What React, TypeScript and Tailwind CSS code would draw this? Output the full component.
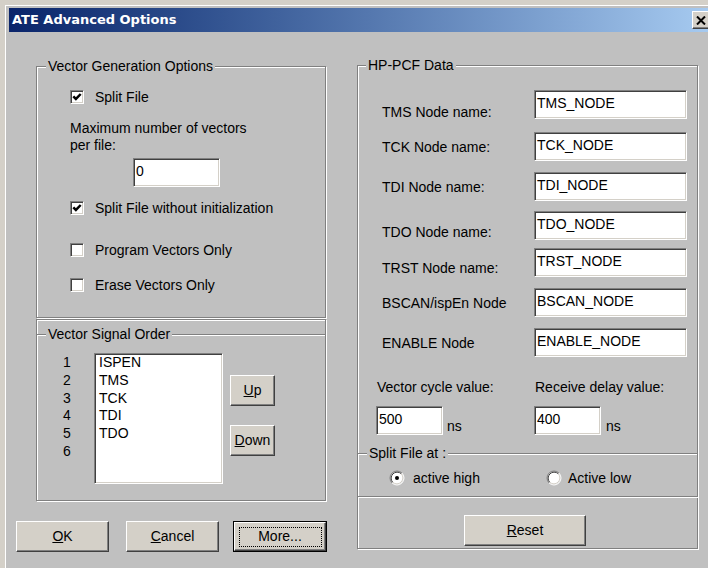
import type { ReactNode } from 'react'

// classic 3D edges
const SUNKEN =
  'border border-t-[#808080] border-l-[#808080] border-r-white border-b-white shadow-[inset_1px_1px_0_#404040,inset_-1px_-1px_0_#d4d0c8]'
const RAISED =
  'bg-[#d4d0c8] border border-t-white border-l-white border-r-[#404040] border-b-[#404040] shadow-[inset_-1px_-1px_0_#808080]'
const ETCHED = 'border border-[#808080] shadow-[inset_1px_1px_0_#fff,1px_1px_0_#fff]'

function Legend({ children, className = '' }: { children: ReactNode; className?: string }) {
  return (
    <span className={`absolute top-[-9px] bg-[#c0c0c0] px-[2px] leading-[16px] whitespace-nowrap ${className}`}>
      {children}
    </span>
  )
}

function CheckBox({ label, checked = false, className = '' }: { label: string; checked?: boolean; className?: string }) {
  return (
    <div className={`flex h-[16px] items-center ${className}`}>
      <span className={`flex h-[14px] w-[14px] shrink-0 items-center justify-center bg-white ${SUNKEN}`}>
        {checked && (
          <svg width="10" height="10" viewBox="0 0 10 10">
            <path d="M1.3 4.3 L3.9 6.9 L8.7 2" fill="none" stroke="#000" strokeWidth="2.5" />
          </svg>
        )}
      </span>
      <span className="ml-[11px] leading-[16px] whitespace-nowrap">{label}</span>
    </div>
  )
}

function Radio({ checked = false }: { checked?: boolean }) {
  return (
    <svg width="16" height="16" viewBox="0 0 16 16" className="shrink-0">
      <circle cx="8" cy="8" r="6.5" fill="#fff" />
      <path d="M3.05 12.95 A7 7 0 0 1 12.95 3.05" fill="none" stroke="#808080" />
      <path d="M12.95 3.05 A7 7 0 0 1 3.05 12.95" fill="none" stroke="#fff" />
      <path d="M3.76 12.24 A6 6 0 0 1 12.24 3.76" fill="none" stroke="#404040" />
      <path d="M12.24 3.76 A6 6 0 0 1 3.76 12.24" fill="none" stroke="#d4d0c8" />
      {checked && <circle cx="8" cy="8" r="2" fill="#000" />}
    </svg>
  )
}

function Field({ value, className = '' }: { value: string; className?: string }) {
  return (
    <div className={`h-[29px] shrink-0 bg-white pl-[2px] pt-[4px] leading-[16px] whitespace-nowrap ${SUNKEN} ${className}`}>
      {value}
    </div>
  )
}

function PushButton({ children, className = '' }: { children: ReactNode; className?: string }) {
  return (
    <button type="button" className={`flex h-[31px] items-center justify-center ${RAISED} ${className}`}>
      {children}
    </button>
  )
}

const nodeRows = [
  { label: 'TMS Node name:', value: 'TMS_NODE', mt: 'mt-[24px]', lt: 'mt-[14px]' },
  { label: 'TCK Node name:', value: 'TCK_NODE', mt: 'mt-[13px]', lt: 'mt-[7px]' },
  { label: 'TDI Node name:', value: 'TDI_NODE', mt: 'mt-[11px]', lt: 'mt-[7px]' },
  { label: 'TDO Node name:', value: 'TDO_NODE', mt: 'mt-[10px]', lt: 'mt-[13px]' },
  { label: 'TRST Node name:', value: 'TRST_NODE', mt: 'mt-[8px]', lt: 'mt-[12px]' },
  { label: 'BSCAN/ispEn Node', value: 'BSCAN_NODE', mt: 'mt-[11px]', lt: 'mt-[7px]' },
  { label: 'ENABLE Node', value: 'ENABLE_NODE', mt: 'mt-[11px]', lt: 'mt-[7px]' },
]

const signals = ['ISPEN', 'TMS', 'TCK', 'TDI', 'TDO']

export default function App() {
  return (
    <div className="h-[568px] w-[708px] overflow-hidden bg-[#d4d0c8] pl-[5px] pt-[5px] font-['Liberation_Sans',Arial,sans-serif] text-[14px] text-black">
      <div className="h-full border-l border-t border-white bg-[#c0c0c0] pl-[3px] pt-[2px]">
        {/* title bar */}
        <div className="flex h-[24px] items-center bg-linear-to-r from-[#0a246a] to-[#a6caf0] pl-[3px]">
          <span className="font-['DejaVu_Sans',sans-serif] text-[13px] font-bold leading-[16px] text-white">
            ATE Advanced Options
          </span>
          <span className={`ml-auto mr-[-2px] flex h-[18px] w-[18px] items-center justify-center ${RAISED}`}>
            <svg width="10" height="9" viewBox="0 0 10 9">
              <path d="M1 0.5 L9 8.5 M9 0.5 L1 8.5" stroke="#000" strokeWidth="2" />
            </svg>
          </span>
        </div>

        <div className="flex pl-[7px]">
          {/* left column */}
          <div className="flex w-[311px] flex-col">
            <div className={`relative ml-[20px] mt-[34px] h-[252px] w-[290px] ${ETCHED}`}>
              <Legend className="left-[9px]">Vector Generation Options</Legend>
              <div className="flex flex-col items-start pl-[33px] pt-[22px]">
                <CheckBox label="Split File" checked />
                <div className="mt-[15px] leading-[17px]">
                  Maximum number of vectors
                  <br />
                  per file:
                </div>
                <Field value="0" className="ml-[63px] mt-[4px] w-[87px]" />
                <CheckBox label="Split File without initialization" checked className="mt-[13px]" />
                <CheckBox label="Program Vectors Only" className="mt-[26px]" />
                <CheckBox label="Erase Vectors Only" className="mt-[19px]" />
              </div>
            </div>

            <div className={`ml-[20px] mt-[1px] h-[182px] w-[290px] ${ETCHED}`}>
              <div className="relative mt-[14px] border-t border-t-[#808080] shadow-[inset_0_1px_0_#fff]">
                <Legend className="left-[9px]">Vector Signal Order</Legend>
                <div className="flex items-start pl-[26px] pt-[18px]">
                  <div className="mt-[1px] w-[15px] leading-[17.8px]">
                    {[1, 2, 3, 4, 5, 6].map((n) => (
                      <div key={n}>{n}</div>
                    ))}
                  </div>
                  <div className={`ml-[16px] h-[131px] w-[129px] bg-white pl-[4px] leading-[17.8px] ${SUNKEN}`}>
                    {signals.map((s) => (
                      <div key={s}>{s}</div>
                    ))}
                  </div>
                  <div className="ml-[7px] flex flex-col">
                    <PushButton className="mt-[22px] w-[45px]">
                      <u>U</u>p
                    </PushButton>
                    <PushButton className="mt-[19px] w-[45px]">
                      <u>D</u>own
                    </PushButton>
                  </div>
                </div>
              </div>
            </div>

            <div className="mt-[20px] flex">
              <PushButton className="w-[93px]">
                <u>O</u>K
              </PushButton>
              <PushButton className="ml-[17px] w-[93px]">
                <u>C</u>ancel
              </PushButton>
              <button type="button" className="ml-[14px] h-[31px] w-[94px] border border-black">
                <span className={`flex h-full w-full items-center justify-center ${RAISED}`}>
                  <span className="flex h-[20px] w-[83px] items-center justify-center border border-dotted border-black">
                    More...
                  </span>
                </span>
              </button>
            </div>
          </div>

          {/* right column */}
          <div className="ml-[30px] mt-[33px] flex w-[341px] flex-col">
            <div className={`relative flex h-[432px] flex-col ${ETCHED}`}>
              <Legend className="left-[8px]">HP-PCF Data</Legend>

              {nodeRows.map((r) => (
                <div key={r.label} className={`flex h-[29px] pl-[24px] ${r.mt}`}>
                  <span className={`w-[152px] self-start leading-[16px] whitespace-nowrap ${r.lt}`}>{r.label}</span>
                  <Field value={r.value} className="w-[153px]" />
                </div>
              ))}

              <div className="mt-[22px] flex pl-[19px] leading-[16px]">
                <span className="w-[158px]">Vector cycle value:</span>
                <span>Receive delay value:</span>
              </div>
              <div className="mt-[11px] flex pl-[18px]">
                <div className="flex w-[158px] items-start">
                  <Field value="500" className="w-[67px]" />
                  <span className="ml-[4px] mt-[12px] leading-[16px]">ns</span>
                </div>
                <div className="flex items-start">
                  <Field value="400" className="w-[67px]" />
                  <span className="ml-[5px] mt-[12px] leading-[16px]">ns</span>
                </div>
              </div>

              <div className="relative mt-[18px] flex-1 border-t border-t-[#808080] shadow-[inset_0_1px_0_#fff]">
                <Legend className="left-[9px]">Split File at :</Legend>
                <div className="flex pl-[31px] pt-[16px]">
                  <div className="flex h-[16px] w-[157px] items-center">
                    <Radio checked />
                    <span className="ml-[8px]">active high</span>
                  </div>
                  <div className="flex h-[16px] items-center">
                    <Radio />
                    <span className="ml-[6px]">Active low</span>
                  </div>
                </div>
              </div>
            </div>

            <div className="h-[52px] border border-t-0 border-[#808080] pl-[106px] pt-[18px] shadow-[inset_1px_0_0_#fff,1px_1px_0_#fff]">
              <PushButton className="w-[122px]">
                <u>R</u>eset
              </PushButton>
            </div>
          </div>
        </div>
      </div>
    </div>
  )
}
